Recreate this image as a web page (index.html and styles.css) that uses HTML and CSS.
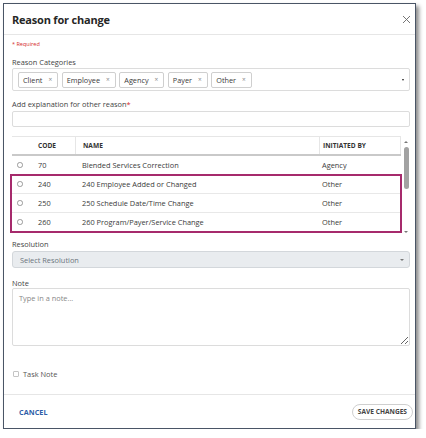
FILE: index.html
```html
<!DOCTYPE html>
<html>
<head>
<meta charset="utf-8">
<link rel="stylesheet" href="styles.css">
</head>
<body>
<div class="dialog">
  <div class="dialog-head">
    <div class="title">Reason for change</div>
    <svg class="close" width="9" height="9" viewBox="0 0 9 9"><path d="M1 1 L8 8 M8 1 L1 8" stroke="#666" stroke-width="0.9" fill="none"/></svg>
  </div>
  <div class="dialog-body">
    <div class="required">* Required</div>
    <div class="label l-cat">Reason Categories</div>
    <div class="chipbox">
      <span class="chip">Client<span class="x">×</span></span>
      <span class="chip">Employee<span class="x">×</span></span>
      <span class="chip">Agency<span class="x">×</span></span>
      <span class="chip">Payer<span class="x">×</span></span>
      <span class="chip">Other<span class="x">×</span></span>
      <span class="caret-dark"></span>
    </div>
    <div class="label l-expl">Add explanation for other reason<span class="star">*</span></div>
    <div class="input"></div>
    <div class="table-wrap">
      <div class="table-clip">
        <div class="row head">
          <div class="c c-r"></div>
          <div class="c c-code">CODE</div>
          <div class="c c-name">NAME</div>
          <div class="c c-init">INITIATED BY</div>
        </div>
        <div class="row">
          <div class="c c-r"><span class="radio"></span></div>
          <div class="c c-code">70</div>
          <div class="c c-name">Blended Services Correction</div>
          <div class="c c-init">Agency</div>
        </div>
        <div class="row">
          <div class="c c-r"><span class="radio"></span></div>
          <div class="c c-code">240</div>
          <div class="c c-name">240 Employee Added or Changed</div>
          <div class="c c-init">Other</div>
        </div>
        <div class="row">
          <div class="c c-r"><span class="radio"></span></div>
          <div class="c c-code">250</div>
          <div class="c c-name">250 Schedule Date/Time Change</div>
          <div class="c c-init">Other</div>
        </div>
        <div class="row">
          <div class="c c-r"><span class="radio"></span></div>
          <div class="c c-code">260</div>
          <div class="c c-name">260 Program/Payer/Service Change</div>
          <div class="c c-init">Other</div>
        </div>
        <div class="row">
          <div class="c c-r"><span class="radio"></span></div>
          <div class="c c-code">270</div>
          <div class="c c-name">270 Member Additional Information Change</div>
          <div class="c c-init">Other</div>
        </div>
      </div>
      <div class="scrollbar">
        <span class="arr up"></span>
        <span class="thumb"></span>
        <span class="arr down"></span>
      </div>
      <div class="highlight"></div>
    </div>
    <div class="label l-res">Resolution</div>
    <div class="select">Select Resolution<span class="caret-grey"></span></div>
    <div class="label l-note">Note</div>
    <textarea class="note" placeholder="Type in a note..."></textarea>
    <div class="task"><span class="check"></span>Task Note</div>
  </div>
  <div class="dialog-foot">
    <span class="cancel">CANCEL</span>
    <span class="save">SAVE CHANGES</span>
  </div>
</div>
</body>
</html>
```

FILE: styles.css
```css
* { box-sizing: border-box; }
html, body { margin: 0; padding: 0; background: #fff; }
body { font-family: "Open Sans", "Liberation Sans", sans-serif; color: #333; }

.dialog {
  margin: 3px 0 0 3px;
  width: 413px;
  height: 426px;
  border: 1px solid #4a5566;
  background: #fff;
  box-shadow: 3px 3px 4px rgba(0,0,0,0.45);
  display: flex;
  flex-direction: column;
}

.dialog-head {
  height: 31px;
  flex: none;
  border-bottom: 1px solid #e6e6e6;
  display: flex;
  align-items: center;
  justify-content: space-between;
  padding: 0 4px 0 8px;
}
.title { font-size: 11px; font-weight: 700; color: #262626; letter-spacing: -0.2px; }

.dialog-body {
  flex: 1;
  padding: 0 5px 0 8px;
  display: flex;
  flex-direction: column;
}

.required { font-size: 5.5px; color: #d42b2b; line-height: 8px; margin-top: 5px; }
.label { font-size: 7.4px; line-height: 10px; color: #444; }
.l-cat { margin-top: 9px; }
.l-expl { margin-top: 8px; }
.l-res { margin-top: 2px; }
.l-note { margin-top: 10px; }
.star { color: #d42b2b; }

.chipbox {
  margin-top: 1px;
  height: 23px;
  border: 1px solid #dcdcdc;
  border-radius: 2px;
  display: flex;
  align-items: center;
  padding-left: 5px;
  gap: 3.5px;
}
.chip {
  height: 16px;
  border: 1px solid #cfcfcf;
  border-radius: 2px;
  display: inline-flex;
  align-items: center;
  padding: 0 5px 0 4px;
  font-size: 7.3px;
  color: #3a3a3a;
}
.chip .x { font-size: 6.5px; color: #888; margin-left: 6px; }
.caret-dark {
  margin-left: auto;
  margin-right: 5px;
  width: 0; height: 0;
  border-left: 1.5px solid transparent;
  border-right: 1.5px solid transparent;
  border-top: 2px solid #222;
}

.input {
  margin-top: 2px;
  height: 16px;
  border: 1px solid #dcdcdc;
  border-radius: 2px;
}

.table-wrap {
  margin-top: 9px;
  height: 101px;
  display: flex;
  position: relative;
}
.table-clip {
  width: 390px;
  height: 101px;
  overflow: hidden;
}
.row {
  display: flex;
  height: 19px;
  border-bottom: 1px solid #e8e8e8;
  align-items: center;
  font-size: 7.4px;
  color: #3a3a3a;
}
.row.head {
  height: 20px;
  border-top: 1px solid #e6e6e6;
  border-bottom: 2px solid #c9c9c9;
  font-size: 6.6px;
  font-weight: 700;
  color: #333;
  align-items: stretch;
}
.row.head .c { display: flex; align-items: center; }
.row.head .c-name, .row.head .c-init { border-left: 1px solid #e6e6e6; }
.row.head .c-init { border-right: 1px solid #e6e6e6; }
.c-r { width: 18px; display: flex; align-items: center; padding-left: 5px; }
.c-code { width: 45px; padding-left: 8px; }
.c-name { width: 244px; padding-left: 7px; }
.c-init { width: 82px; padding-left: 3px; }
.radio {
  width: 5.5px; height: 5.5px;
  border: 0.8px solid #999;
  border-radius: 50%;
  display: inline-block;
}

.scrollbar {
  width: 8px;
  margin-left: 1px;
  height: 101px;
  display: flex;
  flex-direction: column;
  align-items: center;
  padding-top: 5px;
}
.arr { width: 0; height: 0; border-left: 2px solid transparent; border-right: 2px solid transparent; }
.arr.up { border-bottom: 2.5px solid #777; }
.arr.down { border-top: 2.5px solid #777; margin-top: auto; margin-bottom: 4px; }
.thumb {
  margin-top: 4px;
  width: 5px;
  height: 42px;
  border-radius: 3px;
  background: #a2a2a2;
}

.highlight {
  position: absolute;
  left: -2px;
  top: 38px;
  width: 392px;
  height: 59px;
  border: 2px solid #a62a6c;
  pointer-events: none;
}

.select {
  margin-top: 2px;
  height: 17px;
  background: #e9ecef;
  border: 1px solid #d3d7db;
  border-radius: 3px;
  font-size: 7.4px;
  color: #6c757d;
  display: flex;
  align-items: center;
  padding: 0 5px 0 7px;
}
.caret-grey {
  margin-left: auto;
  width: 0; height: 0;
  border-left: 2px solid transparent;
  border-right: 2px solid transparent;
  border-top: 2.5px solid #777;
}

.note {
  display: block;
  margin: 0;
  width: 398px;
  height: 58px;
  border: 1px solid #dcdcdc;
  border-radius: 2px;
  font-family: "Open Sans", "Liberation Sans", sans-serif;
  font-size: 7.4px;
  padding: 4px 6px;
  resize: both;
  outline: none;
}
.note::placeholder { color: #888; }

.task {
  margin-top: 23px;
  display: flex;
  align-items: center;
  font-size: 7.4px;
  line-height: 10px;
  color: #555;
  padding-left: 1px;
}
.check {
  width: 6px; height: 6px;
  border: 1px solid #c4c4c4;
  border-radius: 1px;
  margin-right: 4px;
}

.dialog-foot {
  height: 34px;
  flex: none;
  border-top: 1px solid #e6e6e6;
  display: flex;
  align-items: center;
  justify-content: space-between;
  padding: 0 2px 0 15px;
}
.cancel { font-size: 7.2px; font-weight: 700; color: #2d5ea8; letter-spacing: 0.1px; }
.save {
  height: 16px;
  padding: 0 5px;
  border: 1px solid #cfcfcf;
  border-radius: 8px;
  font-size: 6.6px;
  font-weight: 700;
  color: #444;
  display: flex;
  align-items: center;
}
```
